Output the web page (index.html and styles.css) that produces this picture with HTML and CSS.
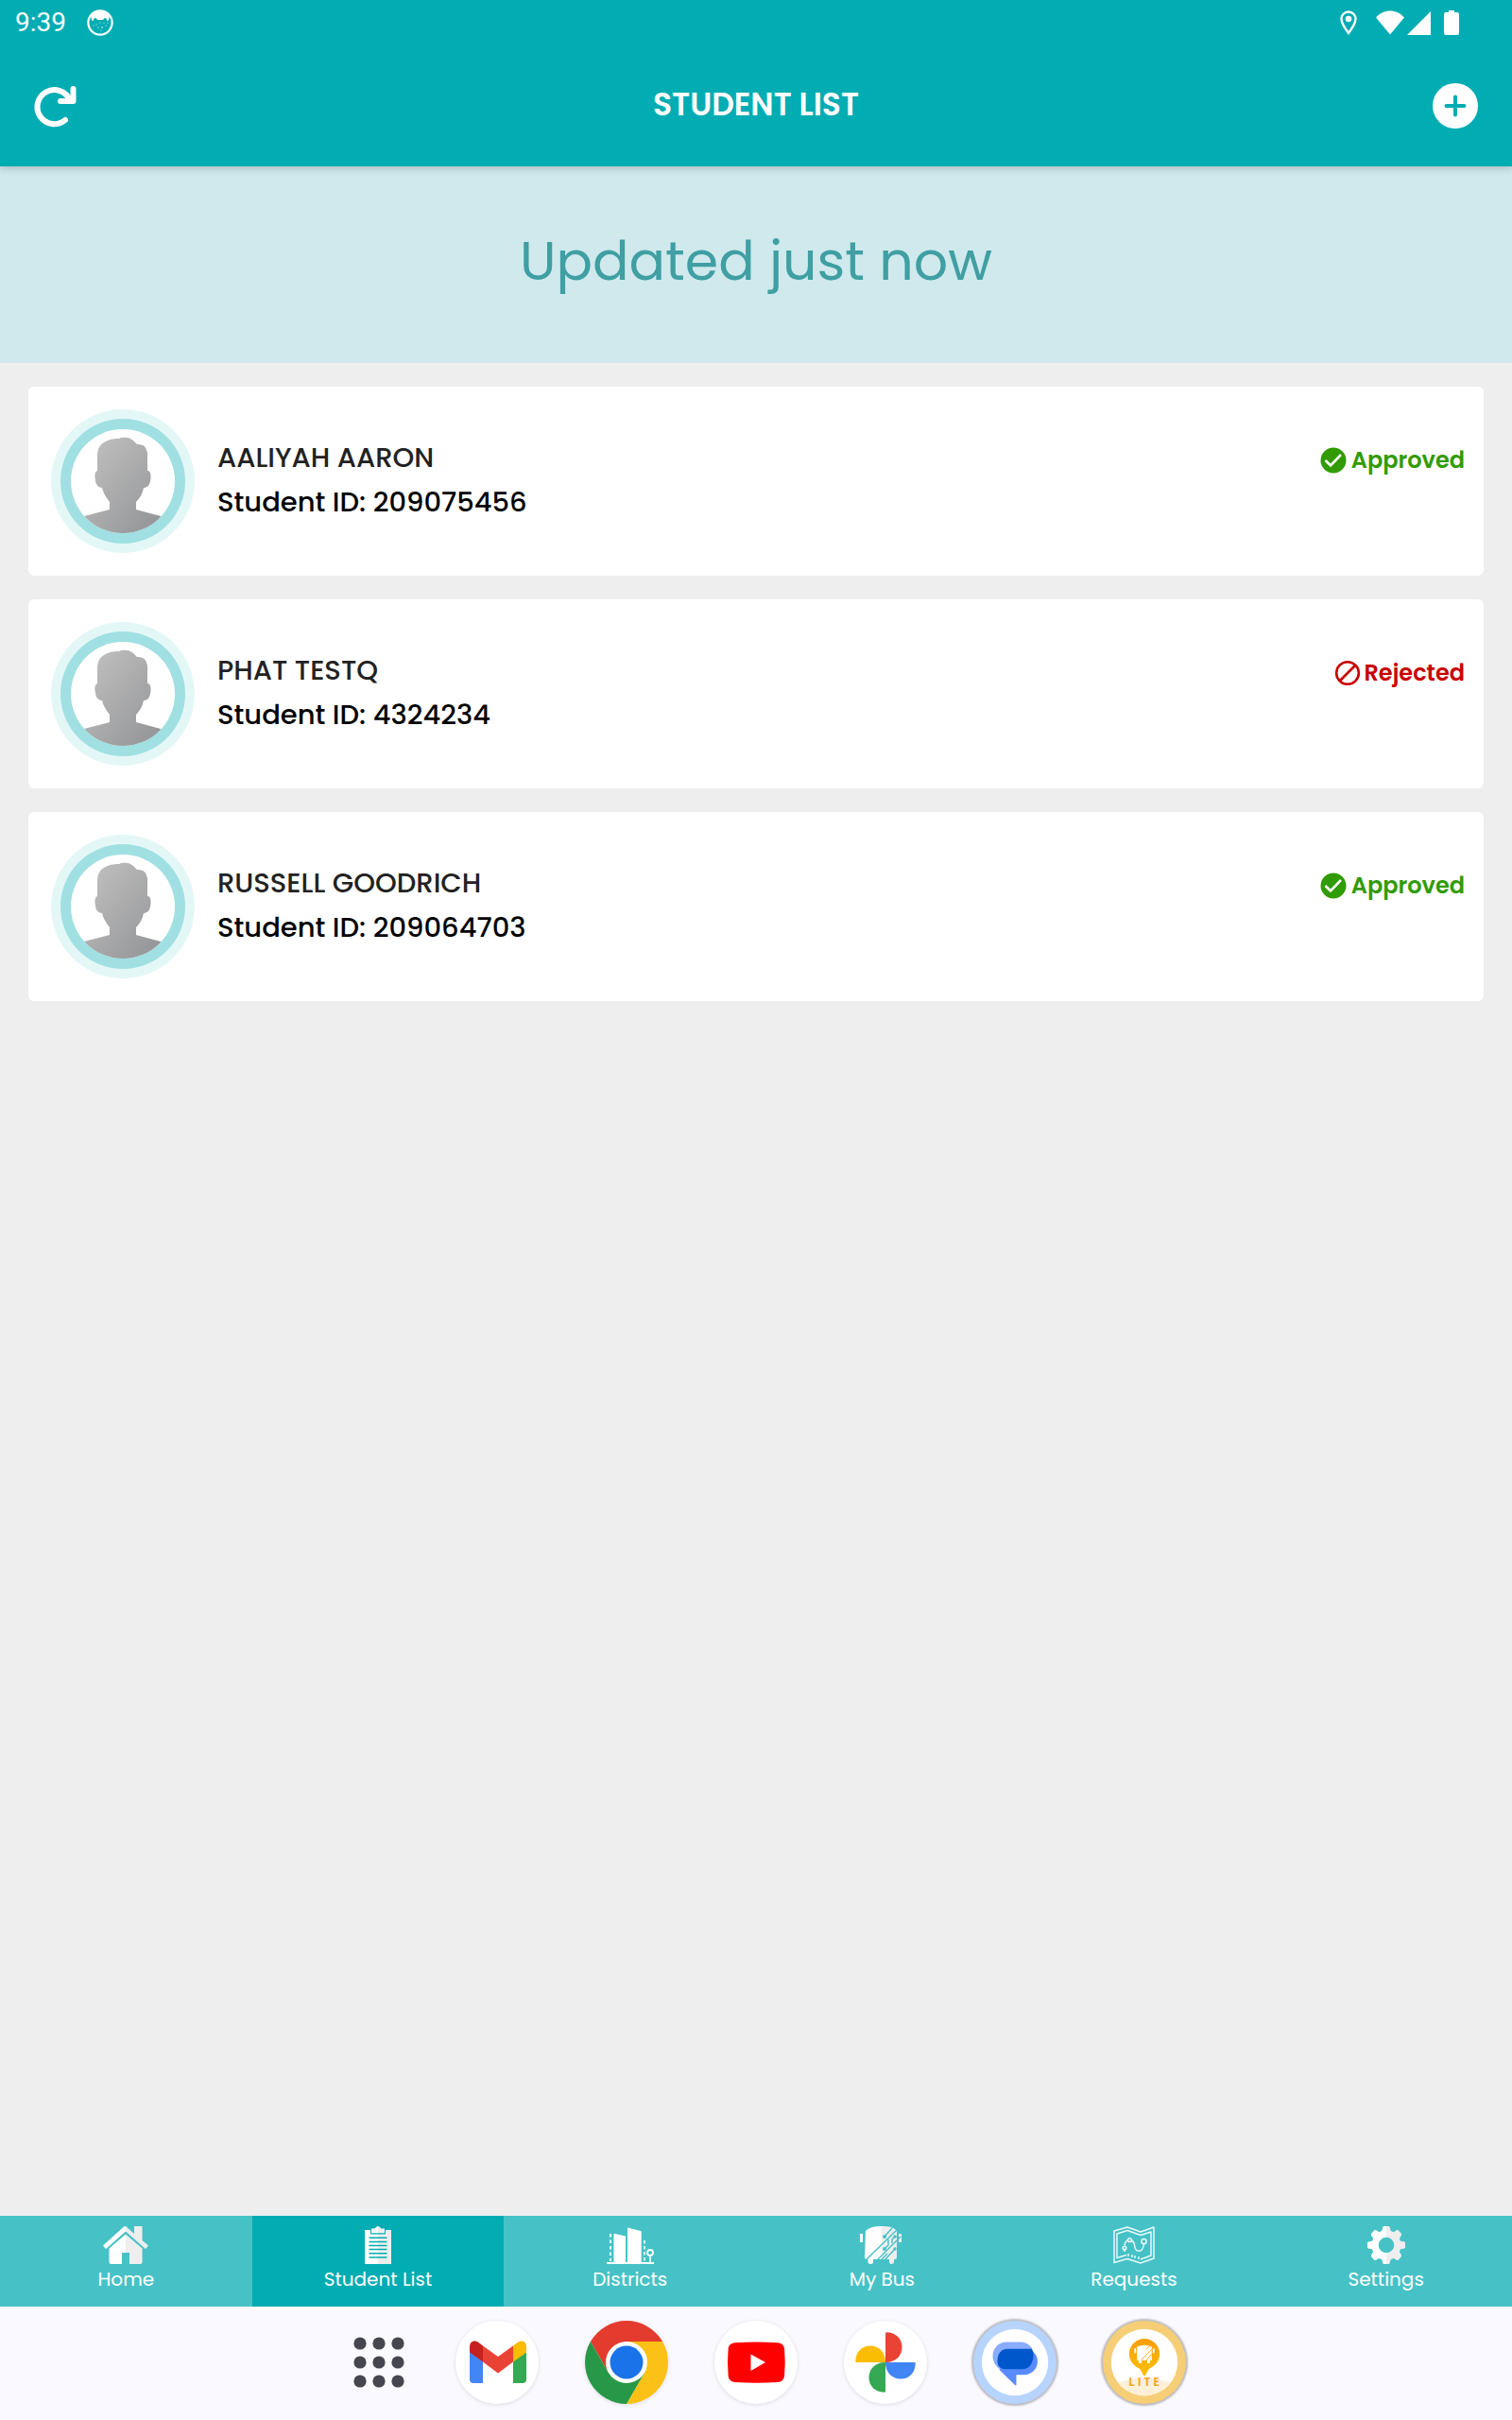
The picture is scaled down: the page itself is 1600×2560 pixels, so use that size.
FILE: index.html
```html
<!DOCTYPE html>
<html lang="en">
<head>
    <meta charset="UTF-8">
    <meta name="viewport" content="width=device-width, initial-scale=1.0">
    <title>Student List</title>
    <link rel="stylesheet" href="styles.css">
</head>
<body>

    <!-- Shared shapes -->
    <svg class="defs" width="0" height="0" aria-hidden="true">
        <defs>
            <linearGradient id="half" gradientUnits="userSpaceOnUse" x1="0" y1="0" x2="50" y2="0">
                <stop offset="0.5" stop-color="#fff"/>
                <stop offset="0.5" stop-color="#eee"/>
            </linearGradient>
            <linearGradient id="person" x1="0" y1="0" x2="1" y2="1">
                <stop offset="0" stop-color="#c4c4c4"/>
                <stop offset="1" stop-color="#8e8f91"/>
            </linearGradient>
            <linearGradient id="pin" x1="0" y1="0" x2="0" y2="1">
                <stop offset="0" stop-color="#f99d0b"/>
                <stop offset="1" stop-color="#fcc000"/>
            </linearGradient>
            <clipPath id="avatar-clip"><circle cx="76" cy="76" r="55"/></clipPath>
            <clipPath id="lite-clip"><circle cx="45" cy="45" r="36"/></clipPath>
            <symbol id="avatar" viewBox="0 0 152 152">
                <circle cx="76" cy="76" r="76" fill="#e4f7f7"/>
                <circle cx="76" cy="76" r="66" fill="#a0e0e2"/>
                <circle cx="76" cy="76" r="55" fill="#fff"/>
                <path clip-path="url(#avatar-clip)" fill="url(#person)" d="M49 65 L49 47 C50 38 55 35 58 34 C63 31 68 31 72 31 L74 30 C80 29 84 30 87 33 L91 37 C97 37 100 39 101 43 L102 46 L102 65 C106 65 106 71 105 76 C104 81 101 83 98 83 C97 89 94 94 90 98 L90 106 L116 113 L120 140 H30 L35 113 L62 106 L62 98 C58 93 55 88 54 83 C50 83 47 79 47 75 C46 71 46 66 49 65 Z"/>
            </symbol>
            <symbol id="approved" viewBox="0 0 28 28">
                <circle cx="14" cy="14" r="13.5" fill="#319b03"/>
                <path d="M5.500 14 L11 19.500 L22 8" fill="none" stroke="#fff" stroke-width="2.600"/>
            </symbol>
            <symbol id="rejected" viewBox="0 0 28 28">
                <circle cx="14" cy="14" r="11.800" fill="none" stroke="#c90000" stroke-width="2.600"/>
                <path d="M6 22 L22 6" stroke="#c90000" stroke-width="2.600"/>
            </symbol>
        </defs>
    </svg>

    <!-- Status bar and title bar -->
    <header class="header">
        <div class="status-bar">
            <span class="time">9:39</span>
            <svg width="28" height="28" viewBox="0 0 28 28">
                <circle cx="14" cy="14" r="12.600" fill="none" stroke="#fff" stroke-width="2.200"/>
                <path d="M4 7 C8 0 20 0 24 7 L23 11 L21.500 12.500 L20.500 9.500 L18.500 9 L17 11 H11 L9.500 9 L7.500 9.500 L6.500 12.500 L5 11 Z" fill="#fff"/>
                <g fill="#fff">
                    <circle cx="14" cy="14" r="0.600"/><circle cx="18" cy="14" r="0.600"/><circle cx="10" cy="16" r="0.600"/>
                    <circle cx="16" cy="19" r="0.800"/><circle cx="12" cy="19" r="0.600"/><circle cx="20" cy="17" r="0.600"/>
                    <circle cx="7" cy="17" r="0.600"/><circle cx="15" cy="22" r="0.500"/><circle cx="22" cy="14" r="0.600"/>
                </g>
            </svg>
            <div class="system-icons">
                <svg width="18" height="26" viewBox="0 0 18 26">
                    <path d="M9 1.500 C4.500 1.500 1.500 5 1.500 9 C1.500 14 6 20 9 24 C12 20 16.500 14 16.500 9 C16.500 5 13.500 1.500 9 1.500 Z" fill="none" stroke="#fff" stroke-width="2.400"/>
                    <circle cx="9" cy="9" r="3.300" fill="#fff"/>
                </svg>
                <svg class="wifi" width="58" height="26" viewBox="0 0 58 26">
                    <path d="M0 7.500 C8 -2 22 -2 30 7.500 L15 25.500 Z" fill="#fff"/>
                    <path d="M58 1 V26 H33 Z" fill="#fff"/>
                </svg>
                <svg width="16" height="26" viewBox="0 0 16 26">
                    <path d="M5 0 H11 V2 H14 Q16 2 16 4 V24 Q16 26 14 26 H2 Q0 26 0 24 V4 Q0 2 2 2 H5 Z" fill="#fff"/>
                </svg>
            </div>
        </div>
        <div class="title-bar">
            <button class="icon-btn" aria-label="Refresh">
                <svg width="48" height="48" viewBox="0 0 48 48" fill="none" stroke="#fff" stroke-width="6" stroke-linecap="round" stroke-linejoin="round">
                    <path d="M33 39 A18 18 0 1 1 38 18"/>
                    <path d="M41.500 6 V19 H28"/>
                </svg>
            </button>
            <h1>STUDENT LIST</h1>
            <button class="icon-btn" aria-label="Add student">
                <svg width="48" height="48" viewBox="0 0 48 48">
                    <circle cx="24" cy="24" r="24" fill="#fff"/>
                    <path d="M24 14.500 V33.500 M14.500 24 H33.500" stroke="#02acb3" stroke-width="4" stroke-linecap="round"/>
                </svg>
            </button>
        </div>
    </header>

    <div class="updated">Updated just now</div>

    <!-- Students -->
    <main class="content">
        <ul class="students">
            <li class="card">
                <svg class="avatar"><use href="#avatar"/></svg>
                <div class="info">
                    <h2>AALIYAH AARON</h2>
                    <p>Student ID: 209075456</p>
                </div>
                <div class="status approved"><svg><use href="#approved"/></svg>Approved</div>
            </li>
            <li class="card">
                <svg class="avatar"><use href="#avatar"/></svg>
                <div class="info">
                    <h2>PHAT TESTQ</h2>
                    <p>Student ID: 4324234</p>
                </div>
                <div class="status rejected"><svg><use href="#rejected"/></svg>Rejected</div>
            </li>
            <li class="card">
                <svg class="avatar"><use href="#avatar"/></svg>
                <div class="info">
                    <h2>RUSSELL GOODRICH</h2>
                    <p>Student ID: 209064703</p>
                </div>
                <div class="status approved"><svg><use href="#approved"/></svg>Approved</div>
            </li>
        </ul>
    </main>

    <!-- Tabs -->
    <nav class="tabs">
        <a href="#">
            <svg viewBox="0 0 50 40" fill="url(#half)">
                <path d="M25 0 L34 8 V0 H42.500 V15 L49 20.500 L46 24 L25 5.500 L4 24 L1 20.500 L22.500 1 Q25 -1 27.500 1 Z"/>
                <path d="M25 8.500 L42.500 23.500 V38 Q42.500 40 40.500 40 H29 V28 H21 V40 H9.500 Q7.500 40 7.500 38 V23.500 Z"/>
            </svg>
            Home
        </a>
        <a href="#" class="active">
            <svg viewBox="0 0 50 40" fill="url(#half)">
                <path d="M11 4 H17 V8.500 H33 V4 H39 V40 H11 Z"/>
                <path d="M18 2.500 H21.500 Q25 -2.500 28.500 2.500 H32 V7.300 H18 Z"/>
                <path d="M15.500 12.300 H34.500 M15.500 16.400 H34.500 M15.500 20.500 H34.500 M15.500 24.600 H34.500 M15.500 28.700 H34.500 M15.500 33 H34.500" stroke="#02acb3" stroke-width="1.500"/>
            </svg>
            Student List
        </a>
        <a href="#">
            <svg viewBox="0 0 50 40" fill="#fff">
                <path d="M7.500 7.700 L20 10.500 V39 H7.500 Z M22 1.500 L36.700 5.300 V39 H22 Z M0 38 H50 V40 H0 Z"/>
                <path d="M4 8 V37" stroke="#fff" stroke-width="2" stroke-dasharray="3.500 3"/>
                <path d="M40 15 V37" stroke="#fff" stroke-width="1.600" stroke-dasharray="3.500 2.500"/>
                <circle cx="46" cy="28" r="3" fill="none" stroke="#fff" stroke-width="1.800"/>
                <path d="M45.200 31 H46.800 V39 H45.200 Z"/>
            </svg>
            Districts
        </a>
        <a href="#">
            <svg viewBox="0 0 50 40" fill="url(#half)">
                <path d="M8 5 C12 1 18 0 25 0 C32 0 38 1 41 5 V33 Q41 35 39 35 H38 V38 Q38 40 35.500 40 Q33 40 33 38 V35 H16 V38 Q16 40 13 40 Q10.500 40 10.500 38 V35 H9 Q7 35 7 33 Z"/>
                <path d="M2 8 H5 V17 H2 Z M43 8 H46 V17 H43 Z"/>
                <g fill="none" stroke="#46c2c7" stroke-width="1.400">
                    <path d="M9 35 L41 4 M28 11 L36 2 M20 36 L45 11 M28 24 L32 20 V14 M28 36 L39 24 M24 36 L31 29 M39 11 L36 14 V18"/>
                </g>
                <g fill="#46c2c7">
                    <circle cx="28" cy="11" r="2"/><circle cx="39" cy="11" r="1.700"/>
                    <circle cx="28" cy="24" r="2"/><circle cx="39" cy="24" r="1.700"/>
                </g>
            </svg>
            My Bus
        </a>
        <a href="#">
            <svg viewBox="0 0 50 40" fill="none" stroke="#e9f8f8" stroke-width="1.500" stroke-linejoin="round">
                <path d="M4 5 L18 1 L32 6 L46 1 V34 L32 39 L18 34.500 L4 38.500 Z"/>
                <path d="M17 30.500 L7 33.500 V8 L18 4.500 L32 9.500 L43 6 V31 L32 35"/>
                <path d="M19 29 V32 M23 30 V33 M26 31 V34 M30 32 V35"/>
                <path d="M15 27 V25 M15 20 Q16 15 19 15 M22 15 Q25 16 25.500 20 C26 28 34 29 35.500 19"/>
                <circle cx="15" cy="23" r="1.800"/><circle cx="20.500" cy="14.700" r="1.900"/><circle cx="35.500" cy="16" r="2.600"/>
            </svg>
            Requests
        </a>
        <a href="#">
            <svg viewBox="0 0 50 40" fill="url(#half)">
                <path fill-rule="evenodd" d="M22 0 H28 Q29 1 29.500 4.500 Q31 6 33 6 Q36 3.500 37.500 4 L41 8 Q41.500 9.500 39 12.500 Q39 14 40 15.700 Q44 16 45 17 V23 Q44 24 40 24.300 Q39 26 39 27.500 Q41.500 30.500 41 32 L37.500 36 Q36 36.500 33 34 Q31 34 29.500 35.500 Q29 39 28 40 H22 Q21 39 20.500 35.500 Q19 34 17 34 Q14 36.500 12.500 36 L9 32 Q8.500 30.500 11 27.500 Q11 26 10 24.300 Q6 24 5 23 V17 Q6 16 10 15.700 Q11 14 11 12.500 Q8.500 9.500 9 8 L12.500 4 Q14 3.500 17 6 Q19 6 20.500 4.500 Q21 1 22 0 Z M25 11.700 A8.300 8.300 0 1 0 25 28.300 A8.300 8.300 0 1 0 25 11.700 Z"/>
            </svg>
            Settings
        </a>
    </nav>

    <!-- System dock -->
    <footer class="dock">
        <button class="all-apps" aria-label="All apps">
            <svg width="54" height="54" viewBox="0 0 54 54" fill="#464650">
                <circle cx="7" cy="7" r="6.600"/><circle cx="27" cy="7" r="6.600"/><circle cx="47" cy="7" r="6.600"/>
                <circle cx="7" cy="27" r="6.600"/><circle cx="27" cy="27" r="6.600"/><circle cx="47" cy="27" r="6.600"/>
                <circle cx="7" cy="47" r="6.600"/><circle cx="27" cy="47" r="6.600"/><circle cx="47" cy="47" r="6.600"/>
            </svg>
        </button>
        <div class="apps">
            <button class="app" aria-label="Gmail">
                <svg viewBox="0 0 88 88">
                    <path d="M15 33 L29 43 V66 H19 Q15 66 15 62 Z" fill="#4285f4"/>
                    <path d="M75 33 L61 43 V66 H71 Q75 66 75 62 Z" fill="#34a853"/>
                    <path d="M29 26.500 L45 38 L61 26.500 V43.500 L45 55.500 L29 43.500 Z" fill="#ea4335"/>
                    <path d="M29 26.500 L24.500 23 C20 20 15 22 15 27.500 V33.500 L29 43.500 Z" fill="#c5221f"/>
                    <path d="M61 26.500 L65.500 23 C70 20 75 22 75 27.500 V33.500 L61 43.500 Z" fill="#fbbc04"/>
                </svg>
            </button>
            <button class="app" aria-label="Chrome">
                <svg viewBox="0 0 88 88">
                    <path d="M5.900 22 A44 44 0 0 1 82.100 22 H44 L24.950 55 Z" fill="#e33b2e"/>
                    <path d="M82.100 22 A44 44 0 0 1 44 88 L63.050 55 L44 22 Z" fill="#fcc116"/>
                    <path d="M44 88 A44 44 0 0 1 5.900 22 L24.950 55 H63.050 Z" fill="#279847"/>
                    <circle cx="44" cy="44" r="22" fill="#fff"/>
                    <circle cx="44" cy="44" r="17.500" fill="#1a73e8"/>
                </svg>
            </button>
            <button class="app" aria-label="YouTube">
                <svg viewBox="0 0 88 88">
                    <path d="M22 23.200 Q44 21.800 67 23.200 Q73 23.800 74 29 Q75.500 44 74 59 Q73 64.500 67 65 Q44 66.500 22 65 Q15.500 64.500 14.700 59 Q13.300 44 14.700 29 Q15.500 23.800 22 23.200 Z" fill="#f00"/>
                    <path d="M38.500 35.500 L54 44 L38.500 53 Z" fill="#fff"/>
                </svg>
            </button>
            <button class="app" aria-label="Photos">
                <svg viewBox="0 0 88 88">
                    <path d="M44 44 V13.500 Q44 12.300 45.200 12.300 C55 12.500 61.500 19 61.500 28 C61.500 37 55 44 44 44 Z" fill="#ea4335"/>
                    <path d="M44 44 H74.500 Q75.700 44 75.700 45.200 C75.500 55 69 61.500 60 61.500 C51 61.500 44 55 44 44 Z" fill="#4285f4"/>
                    <path d="M44 44 V74.500 Q44 75.700 42.800 75.700 C33 75.500 26.500 69 26.500 60 C26.500 51 33 44 44 44 Z" fill="#34a853"/>
                    <path d="M44 44 H13.500 Q12.300 44 12.300 42.800 C12.500 33 19 26.500 28 26.500 C37 26.500 44 33 44 44 Z" fill="#fbbc04"/>
                </svg>
            </button>
            <button class="app messages" aria-label="Messages">
                <svg viewBox="0 0 90 90">
                    <circle cx="45" cy="45" r="36" fill="#fff"/>
                    <path d="M36 23 H51 C60 23 65 30 65 36 L60 52 H28 C23 48 21 43 21 38 C21 29 28 23 36 23 Z" fill="#88acff"/>
                    <path d="M64 33 C68 36 69.500 40 69.500 44 C69.500 52 63 58.500 55 58.500 H46.500 V69 Q46.500 70.500 45 69.500 L28 53 L40 40 Z" fill="#598bff"/>
                    <path d="M37 30.500 H63 Q65 33 65 37 C65 46 60 52.500 53 52.500 H36 C29 52.500 26 49 26 44 C26 36 30 30.500 37 30.500 Z" fill="#0057cc"/>
                </svg>
            </button>
            <button class="app lite" aria-label="Bus Lite">
                <svg viewBox="0 0 90 90">
                    <circle cx="45" cy="45" r="36" fill="#fff"/>
                    <ellipse cx="45" cy="79" rx="40" ry="17" fill="#fdf0d8" clip-path="url(#lite-clip)"/>
                    <path d="M45 19.500 C54 19.500 61.500 27 61.500 36 C61.500 44 56 49 50 52 L46 59 Q45 60.500 44 59 L40 52 C34 49 28.500 44 28.500 36 C28.500 27 36 19.500 45 19.500 Z" fill="url(#pin)"/>
                    <path d="M37 28 Q45 24.500 53 28 V43 H51 V46 H48 V43 H42 V46 H39 V43 H37 Z M34 30 H36 V35 H34 Z M54 30 H56 V35 H54 Z" fill="#fff"/>
                    <path d="M41 43 L54 30 M46 44 L54 35 M47 31 L51 27" stroke="#fba70a" stroke-width="1"/>
                    <text class="lite-label" x="46" y="71" text-anchor="middle">LITE</text>
                </svg>
            </button>
        </div>
    </footer>

</body>
</html>
```

FILE: styles.css
```css
* {
    box-sizing: border-box;
}
body {
    display: flex;
    flex-direction: column;
    min-height: 100vh;
    margin: 0;
    background: #eee;
    font-family: 'Poppins', 'Inter', sans-serif;
    color: #000;
}
h1, h2, p, ul {
    margin: 0;
    padding: 0;
}
button {
    padding: 0;
    border: none;
    background: none;
    cursor: pointer;
}
svg {
    display: block;
    flex-shrink: 0;
}
.defs {
    position: absolute;
}

/* Header */
.header {
    position: relative;
    background: #02acb3;
    color: #fff;
    box-shadow: 0 2px 8px rgba(0, 0, 0, 0.2);
}
.status-bar {
    display: flex;
    align-items: center;
    gap: 22px;
    height: 48px;
    padding: 0 56px 0 16px;
}
.time {
    font-family: 'Roboto', sans-serif;
    font-size: 28px;
    line-height: 48px;
}
.system-icons {
    display: flex;
    align-items: center;
    margin-left: auto;
}
.wifi {
    margin: 0 14px 0 20px;
}
.title-bar {
    display: flex;
    align-items: center;
    justify-content: space-between;
    height: 128px;
    padding: 0 36px;
}
.title-bar h1 {
    padding-bottom: 2px;
    font-size: 33px;
    font-weight: 600;
    line-height: 48px;
}
.updated {
    padding: 64px 0 72px;
    background: #cfe9ec;
    color: #3f9fa3;
    font-size: 57px;
    line-height: 72px;
    text-align: center;
}

/* Student cards */
.content {
    flex: 1;
    padding: 25px 30px;
}
.students {
    display: flex;
    flex-direction: column;
    gap: 25px;
    list-style: none;
}
.card {
    display: flex;
    align-items: center;
    height: 200px;
    padding: 0 20px 0 24px;
    background: #fff;
    border-radius: 6px;
}
.avatar {
    width: 152px;
    height: 152px;
}
.info {
    flex: 1;
    padding: 0 0 2px 24px;
    font-size: 29px;
    line-height: 47px;
}
.info h2 {
    color: #222;
    font-size: 29px;
    font-weight: 500;
}
.info p {
    font-weight: 500;
}
.status {
    display: flex;
    align-items: center;
    align-self: flex-start;
    gap: 5px;
    margin-top: 60px;
    font-size: 24px;
    font-weight: 600;
    line-height: 36px;
}
.status svg {
    width: 28px;
    height: 28px;
}
.approved {
    color: #319b03;
}
.rejected {
    gap: 3px;
    color: #c90000;
}

/* Tabs */
.tabs {
    display: grid;
    grid-template-columns: repeat(6, 1fr);
    background: #46c2c7;
}
.tabs a {
    display: flex;
    flex-direction: column;
    align-items: center;
    height: 96px;
    padding-top: 11px;
    color: #fff;
    font-size: 20px;
    line-height: 32px;
    text-decoration: none;
}
.tabs .active {
    background: #02acb3;
}
.tabs svg {
    width: 50px;
    height: 40px;
}

/* Dock */
.dock {
    display: flex;
    align-items: center;
    justify-content: center;
    gap: 25px;
    height: 120px;
    padding-bottom: 2px;
    background: #faf9ff;
}
.all-apps {
    display: flex;
    justify-content: center;
    width: 112px;
}
.apps {
    display: flex;
    gap: 49px;
}
.app {
    width: 88px;
    height: 88px;
    background: #fff;
    border-radius: 50%;
    box-shadow: 0 1px 4px rgba(0, 0, 0, 0.12);
}
.app svg {
    width: 100%;
    height: 100%;
}
.messages {
    background: #b6d4fe;
    box-shadow: 0 0 2px 2px rgba(0, 0, 0, 0.25);
}
.lite {
    background: #f5ce76;
    box-shadow: 0 0 2px 2px rgba(0, 0, 0, 0.25);
}
.lite-label {
    fill: #f5a623;
    font-family: 'Open Sans', sans-serif;
    font-size: 12px;
    font-weight: 700;
    letter-spacing: 3px;
}
```
